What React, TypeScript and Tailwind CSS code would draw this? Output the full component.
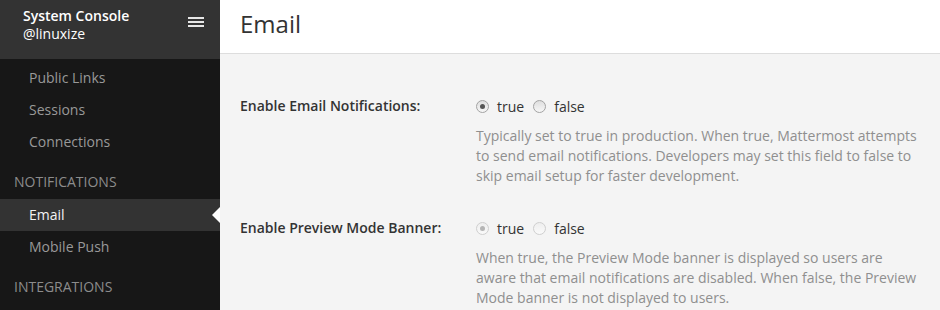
const font = { fontFamily: "'Open Sans', 'Noto Sans', sans-serif" };

const generalItems = ["Public Links", "Sessions", "Connections"];
const notificationItems = ["Email", "Mobile Push"];

function NavItem({ label, active }: { label: string; active?: boolean }) {
  return (
    <div
      className={
        active
          ? "relative h-[32px] pl-[29px] pt-[6px] text-[14px] leading-[20px] bg-[#333333] text-[#f2f2f2]"
          : "relative h-[32px] pl-[29px] pt-[6px] text-[14px] leading-[20px] text-[#999999]"
      }
    >
      {label}
      {active && (
        <span className="absolute right-0 top-[8px] w-0 h-0 border-y-[8px] border-y-transparent border-r-[8px] border-r-white" />
      )}
    </div>
  );
}

function SectionHeader({ label }: { label: string }) {
  return (
    <div className="pl-[14px] pt-[14px] pb-[7px] text-[14px] leading-[20px] text-[#8c8c8c] uppercase">
      {label}
    </div>
  );
}

function Radio({ checked, disabled }: { checked?: boolean; disabled?: boolean }) {
  return (
    <span
      className={
        disabled
          ? "flex items-center justify-center w-[13px] h-[13px] rounded-full border border-[#cfcfcf] bg-gradient-to-b from-[#eeeeee] to-[#fafafa]"
          : "flex items-center justify-center w-[13px] h-[13px] rounded-full border border-[#a3a3a3] bg-gradient-to-b from-[#dedede] to-[#f7f7f7]"
      }
    >
      {checked && (
        <span
          className={
            disabled
              ? "w-[5px] h-[5px] rounded-full bg-[#b5b5b5]"
              : "w-[5px] h-[5px] rounded-full bg-[#555555]"
          }
        />
      )}
    </span>
  );
}

function Setting({
  label,
  help,
  disabled,
}: {
  label: string;
  help: string;
  disabled?: boolean;
}) {
  return (
    <div className="flex mb-[32px]">
      <div className="w-[236px] shrink-0 text-[14px] leading-[20px] font-semibold text-[#333333]">
        {label}
      </div>
      <div className="flex-1">
        <div className="flex items-center h-[20px] text-[14px] text-[#333333]">
          <Radio checked disabled={disabled} />
          <span className="ml-[8px] mr-[9px]">true</span>
          <Radio disabled={disabled} />
          <span className="ml-[8px]">false</span>
        </div>
        <p className="mt-[10px] text-[14px] leading-[20px] text-[#8f8f8f]">{help}</p>
      </div>
    </div>
  );
}

export default function App() {
  return (
    <div className="flex w-[940px] h-[310px] overflow-hidden" style={font}>
      {/* Sidebar */}
      <div className="w-[220px] shrink-0 bg-[#171717] flex flex-col">
        <div className="relative h-[59px] bg-[#333333] pt-[7px] pl-[23px] text-[14px] leading-[18px] text-white">
          <div className="font-semibold">System Console</div>
          <div>@linuxize</div>
          <div className="absolute left-[188px] top-[17px] flex flex-col gap-[2px]">
            <span className="w-[16px] h-[2px] bg-[#e6e6e6]" />
            <span className="w-[16px] h-[2px] bg-[#e6e6e6]" />
            <span className="w-[16px] h-[2px] bg-[#e6e6e6]" />
          </div>
        </div>
        <div className="pt-[3px]">
          {generalItems.map((item) => (
            <NavItem key={item} label={item} />
          ))}
          <SectionHeader label="Notifications" />
          {notificationItems.map((item) => (
            <NavItem key={item} label={item} active={item === "Email"} />
          ))}
          <SectionHeader label="Integrations" />
        </div>
      </div>

      {/* Main */}
      <div className="flex-1 flex flex-col bg-[#f4f4f4]">
        <div className="h-[54px] shrink-0 bg-white border-b border-[#dddddd] pl-[20px] pt-[8px]">
          <h1 className="text-[24px] leading-[32px] text-[#333333]">Email</h1>
        </div>
        <div className="pt-[42px] pl-[20px] pr-[20px]">
          <Setting
            label="Enable Email Notifications:"
            help="Typically set to true in production. When true, Mattermost attempts to send email notifications. Developers may set this field to false to skip email setup for faster development."
          />
          <Setting
            label="Enable Preview Mode Banner:"
            disabled
            help="When true, the Preview Mode banner is displayed so users are aware that email notifications are disabled. When false, the Preview Mode banner is not displayed to users."
          />
        </div>
      </div>
    </div>
  );
}
